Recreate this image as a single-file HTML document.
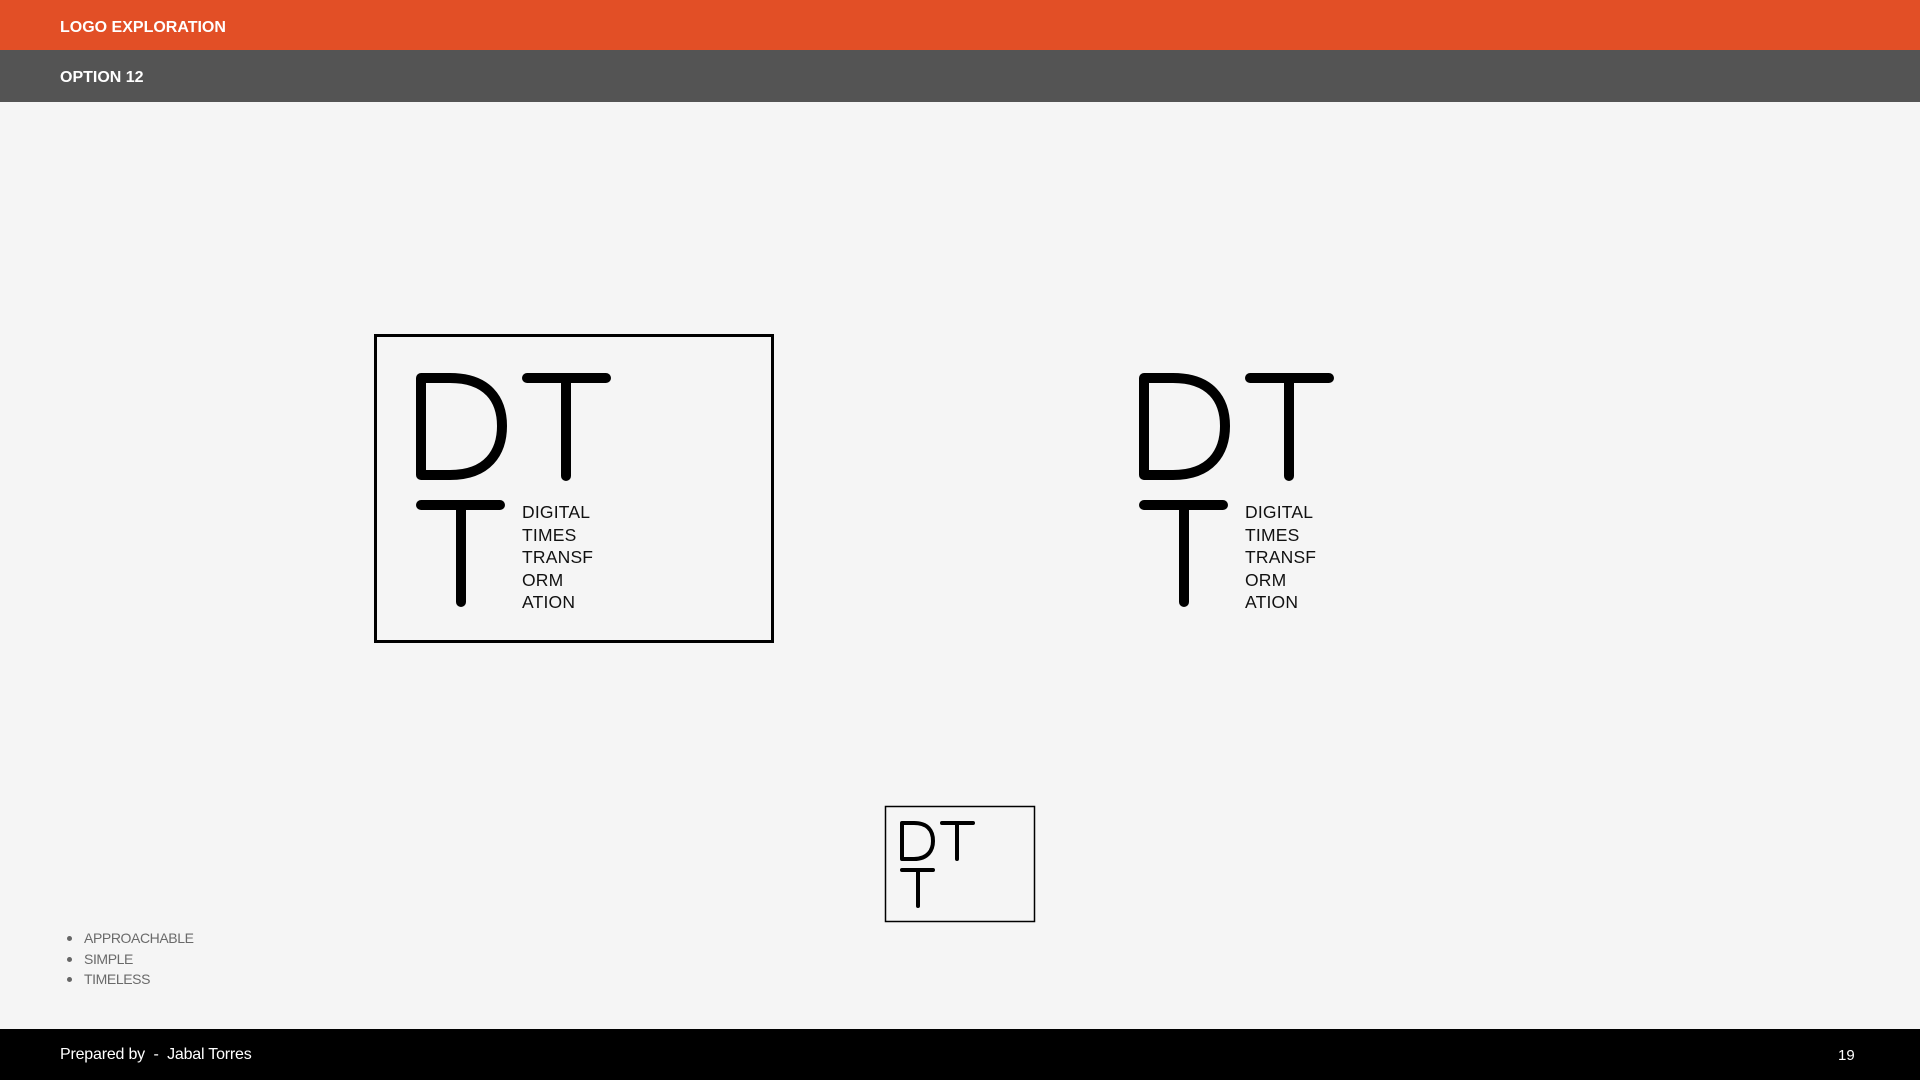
<!DOCTYPE html>
<html><head><meta charset="utf-8"><style>
body{margin:0;width:1920px;height:1080px;background:#f5f5f5;position:relative;overflow:hidden;font-family:"Liberation Sans",sans-serif}
.bar{position:absolute;left:0;width:1920px;color:#fff;font-weight:bold;font-size:16px}
.t{position:absolute;font-size:17.5px;color:#111;line-height:22.5px;letter-spacing:0.2px}
.bl{position:absolute;left:84px;top:928px;color:#6a6a6a;font-size:14px;line-height:20.5px;letter-spacing:-0.4px}
.bl div{position:relative}
.bl div:before{content:"";position:absolute;left:-17px;top:8px;width:5px;height:5px;border-radius:50%;background:#666}
</style></head><body>
<div class="bar" style="top:0;height:50px;background:#e24f26"><span style="position:absolute;left:60px;top:19px">LOGO EXPLORATION</span></div>
<div class="bar" style="top:50px;height:52px;background:#545454"><span style="position:absolute;left:60px;top:19px">OPTION 12</span></div>
<svg width="1920" height="1080" style="position:absolute;left:0;top:0">
<rect x="375.5" y="335.5" width="397" height="306" fill="none" stroke="#000" stroke-width="3"/>
<g fill="none" stroke="#000" stroke-width="10" stroke-linecap="round" stroke-linejoin="round">
<g id="lg">
<path d="M421,378 V475 H450 C488,475 502,452 502,426 C502,400 488,378 450,378 Z"/>
<path d="M527,378 H606 M566,378 V476 M421,505 H500 M461,505 V602"/>
</g>
<use href="#lg" x="723"/>
</g>
<rect x="885.5" y="806.5" width="149" height="115" fill="none" stroke="#000" stroke-width="1.5"/>
<g fill="none" stroke="#000" stroke-width="4" stroke-linecap="round" stroke-linejoin="round">
<path d="M902,823 V859 H914 C928,859 933,850 933,841 C933,831 928,823 914,823 Z"/>
<path d="M942,823 H973 M957,823 V859 M902,870 H933 M918,870 V906"/>
</g>
</svg>
<div class="t" style="left:522px;top:501px">DIGITAL<br>TIMES<br>TRANSF<br>ORM<br>ATION</div>
<div class="t" style="left:1245px;top:501px">DIGITAL<br>TIMES<br>TRANSF<br>ORM<br>ATION</div>
<div class="bl"><div>APPROACHABLE</div><div>SIMPLE</div><div>TIMELESS</div></div>
<div style="position:absolute;left:0;top:1029px;width:1920px;height:51px;background:#000;color:#fff;font-size:16px">
<span style="position:absolute;left:60px;top:17px;letter-spacing:-0.2px">Prepared by &nbsp;-&nbsp; Jabal Torres</span>
<span style="position:absolute;left:1838px;top:18px;font-size:15px">19</span></div>
</body></html>
